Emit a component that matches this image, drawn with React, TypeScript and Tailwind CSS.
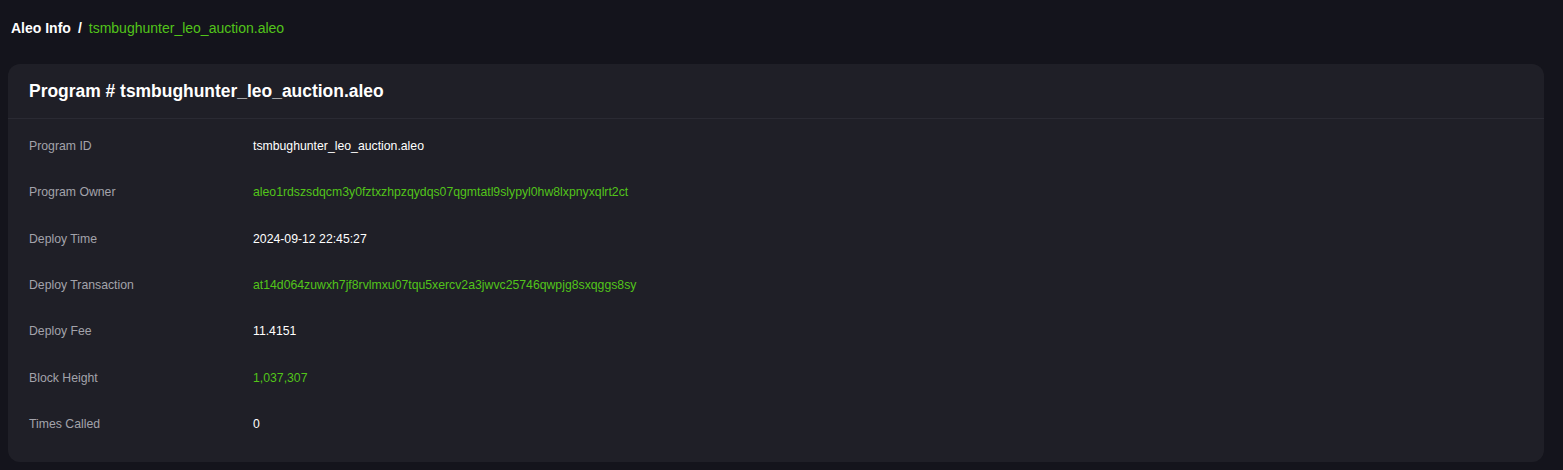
const ROWS: { label: string; value: string; link?: boolean }[] = [
  { label: "Program ID", value: "tsmbughunter_leo_auction.aleo" },
  {
    label: "Program Owner",
    value: "aleo1rdszsdqcm3y0fztxzhpzqydqs07qgmtatl9slypyl0hw8lxpnyxqlrt2ct",
    link: true,
  },
  { label: "Deploy Time", value: "2024-09-12 22:45:27" },
  {
    label: "Deploy Transaction",
    value: "at14d064zuwxh7jf8rvlmxu07tqu5xercv2a3jwvc25746qwpjg8sxqggs8sy",
    link: true,
  },
  { label: "Deploy Fee", value: "11.4151" },
  { label: "Block Height", value: "1,037,307", link: true },
  { label: "Times Called", value: "0" },
];

export default function App() {
  return (
    <div
      className="min-h-[470px] bg-[#14141c] pl-2 pr-[19px] text-white"
      style={{ fontFamily: '"Liberation Sans", Arial, sans-serif' }}
    >
      <nav className="flex h-16 items-center pb-[8px] pl-[3px] text-sm">
        <span className="font-bold text-white">Aleo Info</span>
        <span className="mx-[7px] font-bold text-white">/</span>
        <span className="text-[#52c41a]">tsmbughunter_leo_auction.aleo</span>
      </nav>

      <section className="rounded-xl bg-[#1f1f27]">
        <div className="flex h-[55px] items-center border-b border-[#2a2a33] px-[21px]">
          <h1 className="text-[17.45px] font-bold text-white">
            Program # tsmbughunter_leo_auction.aleo
          </h1>
        </div>
        <div className="px-[21px] pb-[15px] pt-[4px]">
          {ROWS.map((row) => (
            <div key={row.label} className="flex h-[46.33px] items-center text-[12.25px]">
              <div className="w-[224px] shrink-0 text-[#a3a3ab]">{row.label}</div>
              <div className={row.link ? "text-[#52c41a]" : "text-white"}>
                {row.value}
              </div>
            </div>
          ))}
        </div>
      </section>
    </div>
  );
}
